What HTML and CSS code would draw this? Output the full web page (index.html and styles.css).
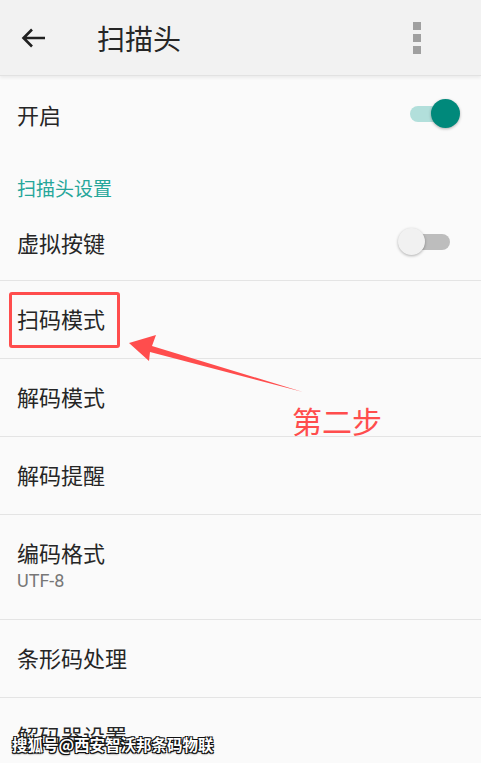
FILE: index.html
```html
<!DOCTYPE html>
<html lang="zh-CN">
<head>
  <meta charset="UTF-8">
  <meta name="viewport" content="width=device-width, initial-scale=1.0">
  <title>扫描头</title>
  <link rel="stylesheet" href="styles.css">
</head>
<body>

  <div class="screen">
    <header class="toolbar">
      <svg class="back" width="26" height="22" viewBox="0 0 26 22">
        <path d="M24 11H3M11 2.5L2.5 11L11 19.5" fill="none" stroke="#212121" stroke-width="2.6"/>
      </svg>
      <h1 class="title">扫描头</h1>
      <div class="kebab"><span></span><span></span><span></span></div>
    </header>

    <div class="row first">
      <span class="label">开启</span>
      <div class="switch on"><i></i></div>
    </div>

    <div class="category">扫描头设置</div>

    <div class="row">
      <span class="label">虚拟按键</span>
      <div class="switch"><i></i></div>
    </div>

    <div class="row line marked">
      <span class="label">扫码模式</span>
      <div class="mark-box"></div>
    </div>

    <div class="row line">
      <span class="label">解码模式</span>
    </div>

    <div class="row line">
      <span class="label">解码提醒</span>
    </div>

    <div class="row line tall">
      <span class="label">编码格式</span>
      <span class="summary">UTF-8</span>
    </div>

    <div class="row line">
      <span class="label">条形码处理</span>
    </div>

    <div class="row line">
      <span class="label">解码器设置</span>
    </div>

    <!-- annotation drawn over the screenshot -->
    <svg class="arrow" width="481" height="763" viewBox="0 0 481 763">
      <path d="M129 343 L156 335 L152 346 L303 392 L150 352 L149 361 Z" fill="#ff4d4d"/>
    </svg>
    <div class="step">第二步</div>

    <div class="watermark">搜狐号@西安智沃邦条码物联</div>
  </div>

</body>
</html>
```

FILE: styles.css
```css
body {
  margin: 0;
  background-color: #fafafa;
  font-family: "Noto Sans CJK SC", "Noto Sans", sans-serif;
  color: #262626;
}
.screen {
  position: relative;
  width: 481px;
  height: 763px;
  overflow: hidden;
  background-color: #fafafa;
}
.toolbar {
  height: 75px;
  background-color: #f2f2f2;
  border-bottom: 1px solid #e2e2e2;
  box-shadow: 0 2px 3px rgba(0, 0, 0, 0.06);
  display: flex;
  align-items: center;
  padding: 0 0 0 21px;
}
.title {
  margin: 0 0 0 50px;
  font-size: 28px;
  font-weight: normal;
  color: #262626;
  flex: 1;
  line-height: 1;
}
.kebab {
  display: flex;
  flex-direction: column;
  gap: 4px;
  margin-right: 60px;
}
.kebab span {
  width: 8px;
  height: 8px;
  background-color: #a0a0a0;
}
.row {
  position: relative;
  height: 76px;
  display: flex;
  align-items: center;
  padding: 0 21px 0 17px;
  box-sizing: border-box;
}
.row.first {
  height: 78px;
  padding-bottom: 2px;
}
.row.line {
  height: 78px;
  border-top: 1px solid #e4e4e4;
  padding-bottom: 3px;
}
.row.tall {
  height: 105px;
  flex-direction: column;
  align-items: flex-start;
  justify-content: center;
  padding-bottom: 4px;
}
.label {
  font-size: 22px;
  line-height: 1;
  flex: 1;
}
.row.line .label {
  flex: none;
}
.summary {
  font-family: Roboto, "Noto Sans", sans-serif;
  font-size: 18px;
  color: #777;
  margin-top: 9px;
  line-height: 1;
}
.category {
  height: 50px;
  box-sizing: border-box;
  padding: 24px 0 0 17px;
  font-size: 19px;
  line-height: 20px;
  color: #26a69a;
}
.switch {
  position: relative;
  width: 46px;
  height: 16px;
  border-radius: 8px;
  background-color: #bdbdbd;
  margin-right: 10px;
}
.switch i {
  position: absolute;
  top: -6px;
  left: -6px;
  width: 27px;
  height: 27px;
  border-radius: 50%;
  background-color: #f1f1f1;
  box-shadow: 0 1px 3px rgba(0, 0, 0, 0.3);
}
.switch.on {
  background-color: #b2dfdb;
  margin-right: 4px;
}
.switch.on i {
  left: auto;
  right: -4px;
  top: -7px;
  width: 29px;
  height: 29px;
  background-color: #00897b;
}
.mark-box {
  position: absolute;
  left: 9px;
  top: 11px;
  width: 105px;
  height: 50px;
  border: 3px solid #ff4d4d;
  border-radius: 3px;
}
.arrow {
  position: absolute;
  left: 0;
  top: 0;
}
.step {
  position: absolute;
  left: 292px;
  top: 402px;
  font-size: 30px;
  line-height: 1.2;
  color: #ff4d4d;
}
.watermark {
  position: absolute;
  left: 12px;
  top: 735px;
  font-size: 15.5px;
  font-weight: bold;
  line-height: 1.2;
  color: #fff;
  text-shadow: -1px -1px 0 #111, 1px -1px 0 #111, -1px 1px 0 #111, 1px 1px 0 #111, 0 1px 2px #000;
}
```
